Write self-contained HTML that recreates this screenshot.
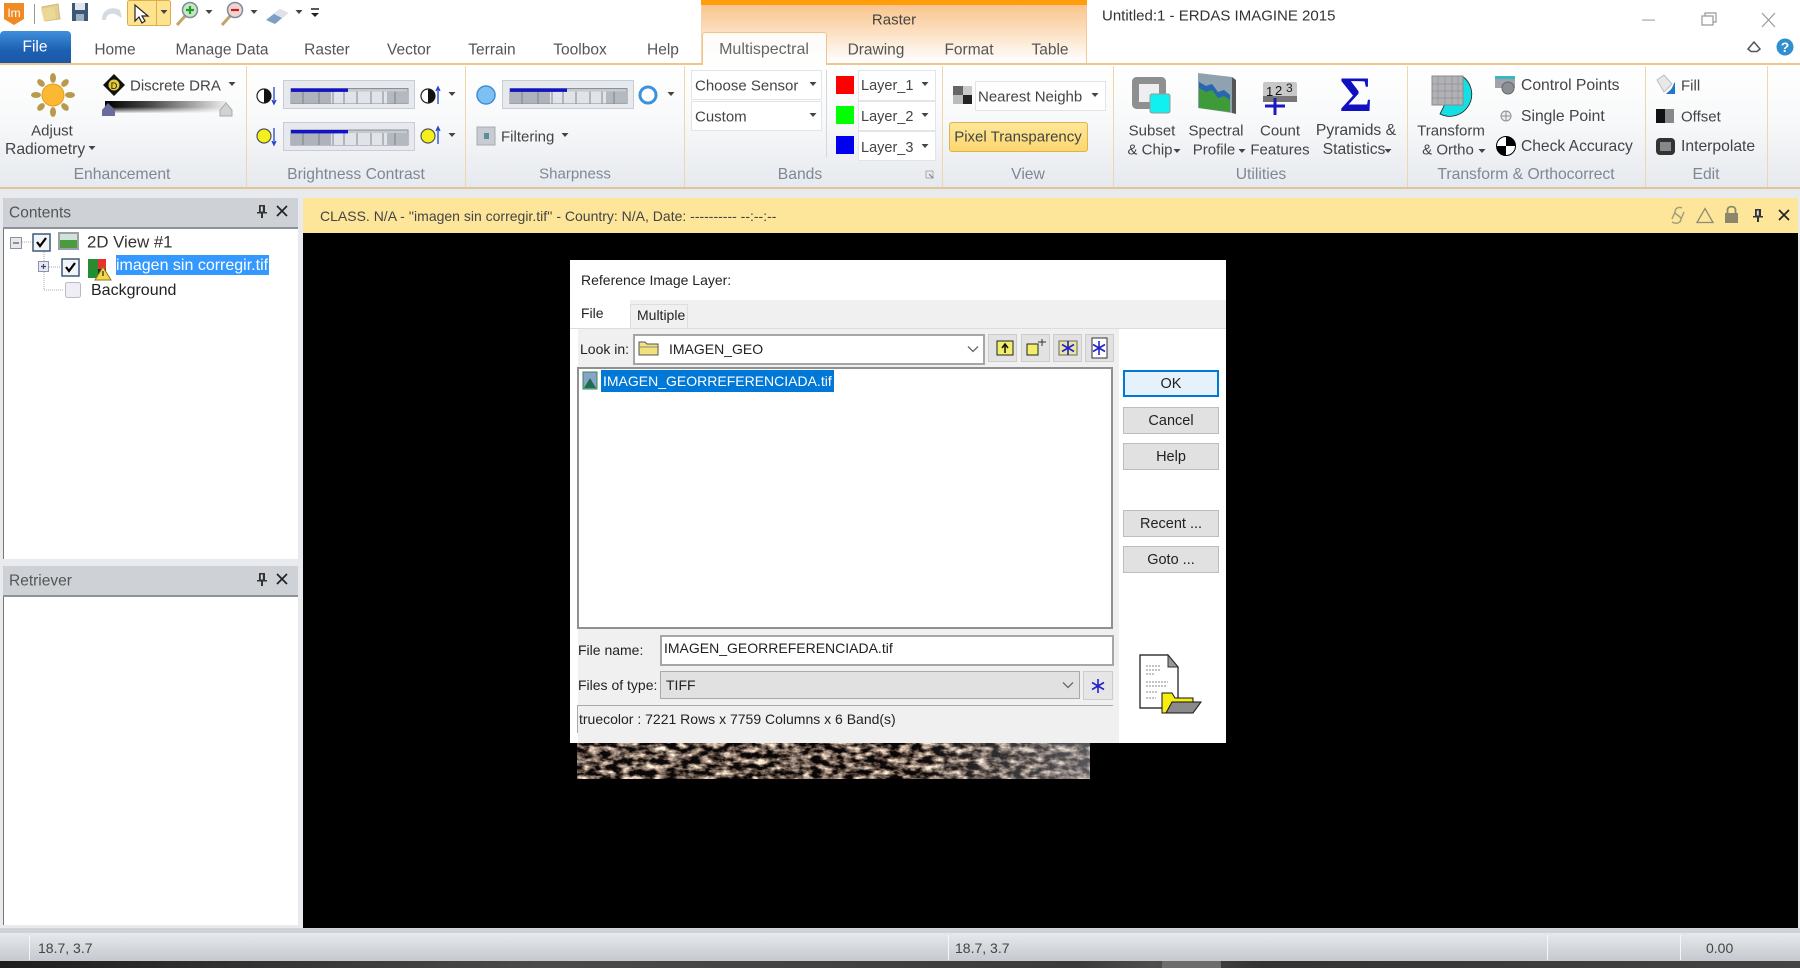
<!DOCTYPE html>
<html><head><meta charset="utf-8"><style>
html,body{margin:0;padding:0;width:1800px;height:968px;overflow:hidden;background:#e8eaed}
body{position:relative;font-family:"Liberation Sans",sans-serif;color:#333;font-size:15px}
#w{position:absolute;left:0;top:0;width:1800px;height:968px;overflow:hidden;filter:blur(.35px)}
.b{position:absolute;box-sizing:border-box}
.t{position:absolute;white-space:nowrap;line-height:1;transform:translateY(-50%)}
.c{position:absolute;white-space:nowrap;line-height:1;transform:translate(-50%,-50%)}
.tab{color:#555;font-size:15.5px}.lab{color:#7e8892;font-size:15.7px}
.rb{color:#444}
.combo{position:absolute;box-sizing:border-box;background:#fff;border:1px solid #e2e4e8}
.slider{position:absolute;box-sizing:border-box;background:#e6e9ee;border:1px solid #c9ccd2}
.btn{position:absolute;box-sizing:border-box;background:#e1e1e1;border:1px solid #bdbdbd;left:1123px;width:96px;height:27px;text-align:center;line-height:27px;font-size:14.5px;color:#222}
.d{color:#222;font-size:14px}
svg{position:absolute;left:0;top:0}
</style></head><body><div id="w">

<!-- title bar -->
<div class="b" style="left:0;top:0;width:1800px;height:63px;background:#fff"></div>
<div class="b" style="left:701px;top:0;width:386px;height:63px;background:linear-gradient(#f9c48c 5px,#fbd9b4 25px,#fff 62px);border-left:1px solid #f3d4b0;border-right:1px solid #f3c89a"></div>
<div class="b" style="left:701px;top:0;width:386px;height:5px;background:#ff9d0a"></div>
<div class="b" style="left:0;top:31px;width:71px;height:33px;background:linear-gradient(#3f8fdc,#1c5fb0 60%,#1a58a6);border-radius:4px 4px 0 0"></div>

<!-- ribbon -->
<div class="b" style="left:0;top:63px;width:1800px;height:126px;background:linear-gradient(#fff 0,#f8f9fa 45%,#e6e9ee 100%);border-top:2px solid #ecc68c;border-bottom:2px solid #e0c59c"></div>
<div class="b" style="left:702px;top:32px;width:125px;height:33px;background:linear-gradient(#fdfaf6,#fff);border:1px solid #ecc68c;border-bottom:0;border-radius:3px 3px 0 0"></div>
<div class="b" style="left:246px;top:66px;width:1px;height:121px;background:#efd7ad"></div>
<div class="b" style="left:465px;top:66px;width:1px;height:121px;background:#efd7ad"></div>
<div class="b" style="left:684px;top:66px;width:1px;height:121px;background:#efd7ad"></div>
<div class="b" style="left:942px;top:66px;width:1px;height:121px;background:#efd7ad"></div>
<div class="b" style="left:1113px;top:66px;width:1px;height:121px;background:#efd7ad"></div>
<div class="b" style="left:1407px;top:66px;width:1px;height:121px;background:#efd7ad"></div>
<div class="b" style="left:1645px;top:66px;width:1px;height:121px;background:#efd7ad"></div>
<div class="b" style="left:1767px;top:66px;width:1px;height:121px;background:#efd7ad"></div>
<div class="b" style="left:826px;top:70px;width:1px;height:87px;background:#d5d7da"></div>

<div class="slider" style="left:283px;top:80px;width:132px;height:29px"></div>
<div class="slider" style="left:283px;top:122px;width:132px;height:29px"></div>
<div class="slider" style="left:502px;top:80px;width:132px;height:29px"></div>

<div class="combo" style="left:691px;top:70px;width:131px;height:30px"></div>
<div class="combo" style="left:691px;top:101px;width:131px;height:30px"></div>
<div class="combo" style="left:858px;top:70px;width:78px;height:31px"></div>
<div class="combo" style="left:858px;top:101px;width:78px;height:30px"></div>
<div class="combo" style="left:858px;top:131px;width:78px;height:30px"></div>
<div class="combo" style="left:975px;top:81px;width:131px;height:30px"></div>
<div class="b" style="left:949px;top:122px;width:139px;height:30px;background:linear-gradient(#fde79a,#fcd76f);border:1px solid #dfb24a;border-radius:3px"></div>
<div class="b" style="left:836px;top:76px;width:18px;height:18px;background:#f00"></div>
<div class="b" style="left:836px;top:106px;width:18px;height:18px;background:#0f0"></div>
<div class="b" style="left:836px;top:136px;width:18px;height:18px;background:#00e"></div>

<!-- panels -->
<div class="b" style="left:3px;top:198px;width:295px;height:31px;background:#ced2d7;border-bottom:2px solid #8e9298"></div>
<div class="b" style="left:3px;top:229px;width:295px;height:330px;background:#fff;border-left:1px solid #777"></div>
<div class="b" style="left:3px;top:566px;width:295px;height:31px;background:#ced2d7;border-bottom:2px solid #8e9298"></div>
<div class="b" style="left:3px;top:597px;width:295px;height:328px;background:#fff;border-left:1px solid #777"></div>
<div class="b" style="left:116px;top:255px;width:153px;height:20px;background:#3399ff"></div>

<!-- view -->
<div class="b" style="left:303px;top:198px;width:1495px;height:35px;background:#fde69a"></div>
<div class="b" style="left:303px;top:233px;width:1495px;height:695px;background:#000"></div>

<!-- status bar -->
<div class="b" style="left:0;top:928px;width:1800px;height:5px;background:#cfd2d6"></div>
<div class="b" style="left:0;top:933px;width:1800px;height:28px;background:linear-gradient(#e6e9ed,#c5c9cf)"></div>
<div class="b" style="left:0;top:961px;width:1800px;height:7px;background:linear-gradient(90deg,#1e1e1e,#4a4a4a 30%,#3a3a3a 60%,#4e4e4e 64%,#333 70%,#444)"></div>
<div class="b" style="left:1162px;top:961px;width:59px;height:7px;background:#6d6d6d"></div>
<div class="b" style="left:29px;top:935px;width:1px;height:25px;background:#f5f6f7"></div>
<div class="b" style="left:948px;top:935px;width:1px;height:25px;background:#f5f6f7"></div>
<div class="b" style="left:1547px;top:935px;width:1px;height:25px;background:#f5f6f7"></div>
<div class="b" style="left:1680px;top:935px;width:1px;height:25px;background:#f5f6f7"></div>

<!-- dialog -->
<div class="b" style="left:570px;top:260px;width:656px;height:483px;background:#fff"></div>
<div class="b" style="left:570px;top:300px;width:656px;height:28px;background:#f0f0f0"></div>
<div class="b" style="left:570px;top:328px;width:549px;height:415px;background:#f0f0f0"></div>
<div class="b" style="left:570px;top:300px;width:60px;height:29px;background:#fff"></div>
<div class="b" style="left:630px;top:304px;width:58px;height:25px;background:#f0f0f0;border:1px solid #ddd;border-bottom:0"></div>
<div class="b" style="left:570px;top:328px;width:656px;height:1px;background:#dcdcdc"></div>
<div class="b" style="left:570px;top:329px;width:549px;height:414px;background:#f0f0f0"></div>
<div class="b" style="left:570px;top:329px;width:8px;height:414px;background:#fff"></div>
<div class="b" style="left:633px;top:334px;width:352px;height:31px;background:#fff;border:2px solid #a6a6a6"></div>
<div class="b" style="left:988px;top:334px;width:29px;height:28px;background:#e2e2e2;border:1px solid #ccc"></div>
<div class="b" style="left:1021px;top:334px;width:29px;height:28px;background:#e2e2e2;border:1px solid #ccc"></div>
<div class="b" style="left:1053px;top:334px;width:29px;height:28px;background:#e2e2e2;border:1px solid #ccc"></div>
<div class="b" style="left:1085px;top:334px;width:29px;height:28px;background:#e2e2e2;border:1px solid #ccc"></div>
<div class="b" style="left:577px;top:367px;width:536px;height:262px;background:#fff;border:2px solid #909090"></div>
<div class="b" style="left:601px;top:370px;width:233px;height:22px;background:#0078d7"></div>
<div class="b" style="left:660px;top:635px;width:454px;height:31px;background:#fff;border:2px solid #a6a6a6"></div>
<div class="b" style="left:660px;top:671px;width:420px;height:28px;background:#e1e1e1;border:1px solid #a9a9a9"></div>
<div class="b" style="left:1083px;top:671px;width:30px;height:29px;background:#e6e6e6;border:1px solid #ccc"></div>
<div class="b" style="left:577px;top:705px;width:536px;height:28px;background:#f0f0f0;border-top:1px solid #a9a9a9;border-left:1px solid #a9a9a9"></div>
<div class="btn" style="top:370px;background:#e5f1fb;border:2px solid #0078d7;line-height:25px">OK</div>
<div class="btn" style="top:407px">Cancel</div>
<div class="btn" style="top:443px">Help</div>
<div class="btn" style="top:510px">Recent ...</div>
<div class="btn" style="top:546px">Goto ...</div>

<!-- icons -->
<svg width="1800" height="968" viewBox="0 0 1800 968">
<defs>
<filter id="rock" x="0" y="0" width="100%" height="100%" color-interpolation-filters="sRGB">
<feTurbulence type="fractalNoise" baseFrequency=".09 .17" numOctaves="5" seed="23"/>
<feColorMatrix values="2.4 0 0 0 -.84 2.25 0 0 0 -.83 2.05 0 0 0 -.77 0 0 0 0 1"/>
</filter>
<linearGradient id="gr" x1="0" x2="1"><stop offset="0" stop-color="#8f9096" stop-opacity=".06"/><stop offset=".65" stop-color="#9aa0a8" stop-opacity=".04"/><stop offset=".85" stop-color="#a0a4ac" stop-opacity=".32"/><stop offset="1" stop-color="#b2b6bd" stop-opacity=".48"/></linearGradient>
<linearGradient id="dra" x1="0" x2="1"><stop offset="0" stop-color="#000"/><stop offset=".35" stop-color="#444"/><stop offset="1" stop-color="#eee"/></linearGradient>
<linearGradient id="dra2" x1="0" x2="0" y1="0" y2="1"><stop offset="0" stop-color="#fff" stop-opacity="0"/><stop offset="1" stop-color="#fff" stop-opacity=".9"/></linearGradient>
<g id="track">
<rect x="0" y="0" width="117" height="15" fill="#c5cad1" stroke="#8b8f96" stroke-width="1"/>
<rect x="0" y="3" width="40" height="12" fill="#aeb3bb"/><rect x="96" y="3" width="21" height="12" fill="#b4b9c0"/>
<rect x="40" y="3" width="56" height="12" fill="#e0e3e8"/>
<path d="M12 3v12M28 3v12M42 3v12M53 3v12M66 3v12M80 3v12M92 3v12M104 3v12" stroke="#6f737a" stroke-width=".8"/>
<rect x="0" y="0" width="57" height="3.4" fill="#1212c8"/>
</g>
<g id="tri"><path d="M-3.5 -2H3.5L0 2z" fill="#444"/></g>
<g id="chev"><path d="M-5 -2.5L0 2.5L5 -2.5" fill="none" stroke="#666" stroke-width="1.3"/></g>
<g id="star"><path d="M0 -7V7M-6 -3.5L6 3.5M-6 3.5L6 -3.5" stroke="#2222cc" stroke-width="1.6"/></g>
<g id="fold"><path d="M-10 6V-7H-4L-2 -5H9V6z" fill="#f2e27c" stroke="#555"/><path d="M-10 -2H10" stroke="#888"/></g>
<g id="pin"><path d="M-3 -6H3V1H5V2.500H1V7H-1V2.500H-5V1H-3z" fill="#333"/><rect x="-1.200" y="-4.500" width="2" height="5" fill="#ddd"/></g>
<g id="x"><path d="M-5 -5L5 5M5 -5L-5 5" stroke="#222" stroke-width="1.700"/></g>
<g id="chk"><rect x="-8" y="-8" width="17" height="17" fill="#f2f4f8" stroke="#3e5a78" stroke-width="1.500"/><path d="M-4 0L-1 4L5 -4" fill="none" stroke="#000" stroke-width="2.200"/></g>
</defs>

<!-- rock strip -->
<rect x="577" y="743" width="513" height="36" filter="url(#rock)"/>
<rect x="577" y="743" width="513" height="36" fill="url(#gr)"/>

<!-- QAT -->
<path d="M4 3H24V19L14 25L4 19z" fill="#f08a24"/><text x="14" y="17" text-anchor="middle" font-family="Liberation Sans" font-size="12" fill="#fff">Im</text>
<rect x="34" y="4" width="1" height="20" fill="#999"/>
<path d="M42 7L58 4L60 19L45 21z" fill="#e2cf90" stroke="#cdbb7c"/><path d="M41 9L54 7L56 19L44 21z" fill="#ecd896"/>
<path d="M72 3H88V21H72z" fill="#3d5877"/><rect x="75" y="3" width="10" height="7" fill="#dfe6ee"/><rect x="76" y="14" width="8" height="7" fill="#9fb0c0"/>
<path d="M102 20C102 9 112 6 120 10L122 18L115 14C110 13 106 15 106 20z" fill="#d6dbe2"/>
<rect x="127.500" y=".5" width="43" height="25" rx="2" fill="#fde38f" stroke="#dcae4a"/><rect x="156" y="1" width="1" height="24" fill="#dcae4a"/>
<path d="M135 5L135 21L139 17L142 23L145 21L142 16L148 16z" fill="#fff" stroke="#222" stroke-width="1.200"/>
<use href="#tri" x="164" y="12"/>
<path d="M177 25L186 15" stroke="#c4a36a" stroke-width="3"/><circle cx="190" cy="10" r="7.500" fill="#c6e8c0" stroke="#7b8c9c" stroke-width="1.500"/><path d="M190 6V14M186 10H194" stroke="#1f9e2a" stroke-width="2.200"/>
<use href="#tri" x="209" y="12"/>
<path d="M222 25L231 15" stroke="#c4a36a" stroke-width="3"/><circle cx="235" cy="10" r="7.500" fill="#f3d2d2" stroke="#7b8c9c" stroke-width="1.500"/><path d="M231 10H239" stroke="#c02020" stroke-width="2.200"/>
<use href="#tri" x="254" y="12"/>
<path d="M266 20L280 9L288 13L275 24z" fill="#7d9fc6"/><path d="M274 14L280 9L288 13L282 18z" fill="#dfe3e8"/>
<use href="#tri" x="299" y="12"/>
<path d="M311 9H319" stroke="#222" stroke-width="1.500"/><path d="M311 13H319L315 17z" fill="#222"/>

<!-- window controls -->
<rect x="1642" y="19.500" width="13" height="1.200" fill="#aaa"/>
<path d="M1702 16H1713V25H1702zM1705 16V13H1716V22H1713" fill="none" stroke="#999" stroke-width="1.200"/>
<path d="M1762 13L1775 27M1775 13L1762 27" stroke="#999" stroke-width="1.200"/>
<path d="M1748 49L1754 42L1760 49L1757 51.500H1751z" fill="none" stroke="#555" stroke-width="1.500"/>
<circle cx="1785" cy="47" r="8.500" fill="#2f8fd0"/><text x="1785" y="52" text-anchor="middle" font-family="Liberation Sans" font-size="14" font-weight="bold" fill="#fff">?</text>

<!-- sun -->
<g transform="translate(53 95)">
<g fill="#b89a4c"><ellipse cx="0" cy="-17" rx="3" ry="5"/><ellipse cx="0" cy="17" rx="3" ry="5"/><ellipse cx="-17" cy="0" rx="5" ry="3"/><ellipse cx="17" cy="0" rx="5" ry="3"/><ellipse cx="-12" cy="-12" rx="3" ry="4.500" transform="rotate(-45 -12 -12)"/><ellipse cx="12" cy="-12" rx="3" ry="4.500" transform="rotate(45 12 -12)"/><ellipse cx="-12" cy="12" rx="3" ry="4.500" transform="rotate(45 -12 12)"/><ellipse cx="12" cy="12" rx="3" ry="4.500" transform="rotate(-45 12 12)"/></g>
<circle r="11" fill="#fbb832" stroke="#e59a20"/></g>
<!-- DRA -->
<path d="M114 74L125 85L114 96L103 85z" fill="#111"/><circle cx="114" cy="85" r="5.500" fill="#e3c93c"/><text x="114" y="89" font-family="Liberation Sans" font-size="9" text-anchor="middle" fill="#111">D</text>
<rect x="105" y="101" width="122" height="12" fill="url(#dra)"/><rect x="105" y="107" width="122" height="6" fill="url(#dra2)"/>
<path d="M102 116V110L108 103L115 110V116z" fill="#6a6a9c"/><path d="M220 116V110L226 103L232 110V116z" fill="#d2d2d2" stroke="#aaa"/>
<use href="#tri" x="232" y="84"/><use href="#tri" x="92" y="148"/>

<!-- Brightness -->
<use href="#track" x="291" y="88.500"/><use href="#track" x="291" y="130"/><use href="#track" x="510" y="88.500"/>
<circle cx="264" cy="96" r="7" fill="#fff" stroke="#222" stroke-width="1.200"/><path d="M264 89A7 7 0 0 1 264 103z" fill="#111"/><path d="M274 87V103M272 100L274 104L276 100" stroke="#2244cc" fill="none" stroke-width="1.300"/>
<circle cx="428" cy="96" r="7" fill="#fff" stroke="#222" stroke-width="1.200"/><path d="M428 89A7 7 0 0 1 428 103z" fill="#111"/><path d="M438 88V104M436 91L438 87L440 91" stroke="#2244cc" fill="none" stroke-width="1.300"/>
<use href="#tri" x="452" y="94"/>
<circle cx="264" cy="136" r="7" fill="#f4f01e" stroke="#555" stroke-width="1.200"/><path d="M274 128V144M272 141L274 145L276 141" stroke="#2244cc" fill="none" stroke-width="1.300"/>
<circle cx="428" cy="136" r="7" fill="#f4f01e" stroke="#555" stroke-width="1.200"/><path d="M438 128V144M436 131L438 127L440 131" stroke="#2244cc" fill="none" stroke-width="1.300"/>
<use href="#tri" x="452" y="135"/>
<!-- Sharpness -->
<circle cx="486" cy="95" r="9" fill="#7fc0f3" stroke="#3e8fd6" stroke-width="1.500"/>
<circle cx="648" cy="95" r="8" fill="#fff" stroke="#3b92dc" stroke-width="3"/>
<use href="#tri" x="671" y="94"/>
<rect x="477" y="127" width="18" height="18" fill="#c8ccd0" stroke="#a8acb2"/><rect x="484" y="133" width="5" height="6" fill="#5a8f9e"/>
<use href="#tri" x="565" y="135"/>

<!-- Bands combos -->
<use href="#tri" x="813" y="84"/><use href="#tri" x="813" y="115"/>
<use href="#tri" x="925" y="84"/><use href="#tri" x="925" y="115"/><use href="#tri" x="925" y="146"/>
<path d="M926 171H933V178H926z" fill="none" stroke="#aaa"/><path d="M929 174L933 178" stroke="#777"/>
<!-- View -->
<rect x="953" y="86" width="10" height="9" fill="#666"/><rect x="963" y="86" width="9" height="9" fill="#c9c9c9"/><rect x="953" y="95" width="10" height="9" fill="#bbb"/><rect x="963" y="95" width="9" height="9" fill="#222"/>
<use href="#tri" x="1095" y="95"/>

<!-- Subset -->
<rect x="1135.500" y="80.500" width="27" height="25" fill="#eceef0" stroke="#8f8f8f" stroke-width="7" rx="1"/>
<rect x="1150" y="94" width="20" height="19" rx="2" fill="#10f0f0" stroke="#999"/>
<use href="#tri" x="1177" y="151"/>
<!-- Spectral -->
<path d="M1198 73L1232 77V113L1198 108z" fill="#8fa2b0"/>
<path d="M1199 82L1206 86L1212 84L1218 92L1224 90L1230 95V112L1199 108z" fill="#3f9a3a"/>
<path d="M1199 82L1206 86L1212 84L1218 92L1224 90L1230 95V100L1224 96L1218 98L1212 90L1206 92L1199 88z" fill="#2a66b0"/>
<path d="M1232 77L1236 80V114L1232 113z" fill="#555"/>
<use href="#tri" x="1242" y="151"/>
<!-- Count -->
<rect x="1263" y="82" width="34" height="20" rx="2" fill="#c8c8c8"/><rect x="1263" y="96" width="34" height="6" fill="#777"/>
<text x="1266" y="96" font-family="Liberation Sans" font-size="13" fill="#111">1</text><text x="1275" y="95" font-family="Liberation Sans" font-size="13" fill="#111">2</text><text x="1286" y="92" font-family="Liberation Sans" font-size="12" fill="#222">3</text>
<path d="M1275 98V115M1265 106H1285" stroke="#1a1abf" stroke-width="3"/>
<!-- Sigma -->
<text x="1356" y="111" text-anchor="middle" font-family="Liberation Serif" font-size="50" font-weight="bold" fill="#1010c0">Σ</text>
<use href="#tri" x="1388" y="151"/>
<!-- Transform -->
<path d="M1462 76A22 22 0 0 1 1440 114L1445 104H1462z" fill="#14e0e4" stroke="#1a1a1a" stroke-width=".8"/>
<path d="M1432 76H1463V105H1432z" fill="#b2b2b6" stroke="#8a8a8e"/>
<path d="M1438 76V105M1445 76V105M1452 76V105M1458 76V105M1432 84H1463M1432 91H1463M1432 98H1463" stroke="#8f8f94" stroke-width=".7"/>
<use href="#tri" x="1482" y="151"/>
<!-- Control points etc -->
<rect x="1495" y="76" width="20" height="12" fill="#a0a4aa"/><rect x="1495" y="76" width="20" height="3" fill="#39b7bf"/>
<circle cx="1508" cy="88" r="6" fill="#8a8f96" stroke="#666"/>
<circle cx="1506" cy="116" r="5" fill="#eef0f2" stroke="#8a8f96"/><path d="M1501 116H1511M1506 111V121" stroke="#8a8f96"/>
<circle cx="1506" cy="146" r="9.500" fill="#fff" stroke="#000"/><path d="M1506 136.500A9.500 9.500 0 0 1 1515.500 146H1506zM1506 146V155.500A9.500 9.500 0 0 1 1496.500 146z" fill="#000"/>
<!-- Edit -->
<path d="M1657 80L1664 75L1672 84L1664 92z" fill="#e8e8e8" stroke="#bbb"/><path d="M1668 92C1673 89 1673 84 1675 82L1675 94H1666z" fill="#1f78c8"/>
<rect x="1656" y="109" width="9" height="14" fill="#111"/><rect x="1665" y="109" width="9" height="14" fill="#888"/>
<rect x="1656" y="138" width="19" height="17" rx="4" fill="#333"/><rect x="1660" y="142" width="11" height="9" fill="#888"/>

<!-- panel icons -->
<use href="#pin" x="262" y="211"/><use href="#x" x="282" y="211"/>
<use href="#pin" x="262" y="579"/><use href="#x" x="282" y="579"/>
<rect x="10.500" y="237.500" width="11" height="11" fill="#e6e8ec" stroke="#8c93a0"/><path d="M13 243H19" stroke="#555" stroke-width="1.200"/>
<path d="M22 242H33M44 250V290M49 267H61M44 290H63" stroke="#aaa" stroke-dasharray="1 1" fill="none"/>
<use href="#chk" x="41" y="242"/>
<rect x="58" y="232" width="21" height="18" fill="#9aa0a8"/><rect x="60" y="234" width="17" height="6" fill="#cfe3d8"/><rect x="60" y="240" width="17" height="8" fill="#4c9a3e"/>
<rect x="38.500" y="261.500" width="10" height="10" fill="#e6e8f0" stroke="#8c93b0"/><path d="M41 266.500H46M43.500 264V269" stroke="#447" stroke-width="1.200"/>
<use href="#chk" x="70" y="267"/>
<rect x="88" y="259" width="10" height="10" fill="#2a8a30"/><rect x="98" y="259" width="8" height="10" fill="#e83030"/><rect x="88" y="269" width="10" height="9" fill="#1f8f2f"/><rect x="98" y="269" width="8" height="9" fill="#222"/>
<path d="M103 267L111 280H95z" fill="#f5d84a" stroke="#8a7a20"/><path d="M103 271V276" stroke="#222" stroke-width="1.200"/>
<rect x="65.500" y="282.500" width="15" height="15" rx="2" fill="#eeeef6" stroke="#bbb"/>

<!-- view bar icons -->
<path d="M1682 208C1678 206 1675 209 1675 212C1675 215 1681 216 1681 219C1681 222 1677 225 1672 222M1675 212L1672 219M1681 219L1684 212" fill="none" stroke="#a39c82" stroke-width="1.500"/>
<path d="M1697 222.500L1705 208.500L1713 222.500z" fill="none" stroke="#8e8a76" stroke-width="1.300"/>
<rect x="1725" y="213" width="13" height="10" fill="#8c866c"/><path d="M1727.500 213V210C1727.500 205.500 1735.500 205.500 1735.500 210V213" fill="none" stroke="#8c866c" stroke-width="1.800"/>
<use href="#pin" x="1758" y="215"/><use href="#x" x="1784" y="215"/>

<!-- dialog icons -->
<use href="#fold" x="649" y="349"/><use href="#chev" x="973" y="349"/>
<rect x="997" y="341" width="16" height="14" fill="#f3ee6a" stroke="#222"/><path d="M1005 353V345M1002 348L1005 344L1008 348" fill="none" stroke="#111" stroke-width="1.500"/>
<path d="M1027 344H1038V355H1027z" fill="#f3ee6a" stroke="#222"/><path d="M1042 339L1042 346M1038 342H1046" stroke="#333"/>
<rect x="1059" y="341" width="18" height="14" fill="#e9e6a0" stroke="#666"/><use href="#star" x="1068" y="348"/>
<rect x="1092" y="338" width="15" height="20" fill="#fff" stroke="#333"/><use href="#star" x="1099" y="348"/>
<rect x="583" y="372" width="14" height="17" fill="#88a4c8" stroke="#385"/><path d="M584 388L590 378L596 388z" fill="#1f6e4d"/>
<use href="#chev" x="1068" y="685"/>
<use href="#star" x="1098" y="686"/>
<path d="M1140 655H1168L1178 667V708H1140z" fill="#fff" stroke="#111" stroke-width="1.200"/><path d="M1168 655L1178 667H1168z" fill="#999" stroke="#333"/>
<path d="M1146 666H1160M1146 670H1160M1146 674H1154M1146 682H1168M1146 686H1166M1146 692H1158M1146 698H1156" stroke="#888" stroke-dasharray="2 1"/>
<path d="M1162 713V693H1172L1175 698H1193V702H1172L1168 713z" fill="#f6ee10" stroke="#111"/>
<path d="M1166 713L1172 702H1201L1193 713z" fill="#8a8a8a" stroke="#111"/>
</svg>

<!-- tabs text -->
<div class="c" style="left:35px;top:47px;color:#fff;font-size:15.5px">File</div>
<div class="c tab" style="left:115px;top:49.500px">Home</div>
<div class="c tab" style="left:222px;top:49.500px">Manage Data</div>
<div class="c tab" style="left:327px;top:49.500px">Raster</div>
<div class="c tab" style="left:409px;top:49.500px">Vector</div>
<div class="c tab" style="left:492px;top:49.500px">Terrain</div>
<div class="c tab" style="left:580px;top:49.500px">Toolbox</div>
<div class="c tab" style="left:663px;top:49.500px">Help</div>
<div class="c tab" style="left:764px;top:49.500px;font-size:16px;color:#666">Multispectral</div>
<div class="c tab" style="left:876px;top:49.500px">Drawing</div>
<div class="c tab" style="left:969px;top:49.500px">Format</div>
<div class="c tab" style="left:1050px;top:49.500px">Table</div>
<div class="c" style="left:894px;top:20px;font-size:15px;color:#444">Raster</div>
<div class="t" style="left:1102px;top:16px;font-size:15px;color:#333">Untitled:1 - ERDAS IMAGINE 2015</div>

<!-- ribbon text -->
<div class="c rb" style="left:52px;top:131px">Adjust</div>
<div class="t rb" style="left:5px;top:150px;font-size:15.7px">Radiometry</div>
<div class="t rb" style="left:130px;top:86px">Discrete DRA</div>
<div class="t rb" style="left:501px;top:137px">Filtering</div>
<div class="t rb" style="left:695px;top:86px">Choose Sensor</div>
<div class="t rb" style="left:695px;top:117px">Custom</div>
<div class="t rb" style="left:861px;top:86px;font-size:14.5px">Layer_1</div>
<div class="t rb" style="left:861px;top:117px;font-size:14.5px">Layer_2</div>
<div class="t rb" style="left:861px;top:148px;font-size:14.5px">Layer_3</div>
<div class="t rb" style="left:978px;top:96.500px">Nearest Neighb</div>
<div class="c rb" style="left:1018px;top:137px">Pixel Transparency</div>
<div class="c rb" style="left:1152px;top:131px">Subset</div>
<div class="c rb" style="left:1150px;top:150px">&amp; Chip</div>
<div class="c rb" style="left:1216px;top:131px">Spectral</div>
<div class="c rb" style="left:1214px;top:150px">Profile</div>
<div class="c rb" style="left:1280px;top:131px">Count</div>
<div class="c rb" style="left:1280px;top:150px">Features</div>
<div class="c rb" style="left:1356px;top:131px;font-size:15.7px">Pyramids &amp;</div>
<div class="c rb" style="left:1354px;top:150px;font-size:15.7px">Statistics</div>
<div class="c rb" style="left:1451px;top:131px">Transform</div>
<div class="c rb" style="left:1448px;top:150px">&amp; Ortho</div>
<div class="t rb" style="left:1521px;top:86px;font-size:15.7px">Control Points</div>
<div class="t rb" style="left:1521px;top:117px;font-size:15.7px">Single Point</div>
<div class="t rb" style="left:1521px;top:147px;font-size:15.6px">Check Accuracy</div>
<div class="t rb" style="left:1681px;top:86px">Fill</div>
<div class="t rb" style="left:1681px;top:117px">Offset</div>
<div class="t rb" style="left:1681px;top:147px;font-size:15.7px">Interpolate</div>

<div class="c lab" style="left:122px;top:174.500px">Enhancement</div>
<div class="c lab" style="left:356px;top:174.500px">Brightness Contrast</div>
<div class="c lab" style="left:575px;top:174px;font-size:15px">Sharpness</div>
<div class="c lab" style="left:800px;top:174.500px">Bands</div>
<div class="c lab" style="left:1028px;top:174.500px">View</div>
<div class="c lab" style="left:1261px;top:174.500px">Utilities</div>
<div class="c lab" style="left:1526px;top:174.500px">Transform &amp; Orthocorrect</div>
<div class="c lab" style="left:1706px;top:174.500px">Edit</div>

<!-- panels text -->
<div class="t" style="left:9px;top:212.500px;font-size:15.5px;color:#555">Contents</div>
<div class="t" style="left:9px;top:581px;font-size:15.5px;color:#555">Retriever</div>
<div class="t" style="left:87px;top:243px;font-size:16.8px;color:#333">2D View #1</div>
<div class="t" style="left:116px;top:266px;font-size:16px;color:#fff">imagen sin corregir.tif</div>
<div class="t" style="left:91px;top:291px;font-size:16px;color:#222">Background</div>
<div class="t" style="left:320px;top:216px;font-size:14px;color:#444">CLASS. N/A - ''imagen sin corregir.tif'' - Country: N/A, Date: ---------- --:--:--</div>

<!-- status text -->
<div class="t" style="left:38px;top:948px;font-size:14px;color:#444">18.7, 3.7</div>
<div class="t" style="left:955px;top:948px;font-size:14px;color:#444">18.7, 3.7</div>
<div class="t" style="left:1706px;top:948px;font-size:14px;color:#444">0.00</div>

<!-- dialog text -->
<div class="t d" style="left:581px;top:279.500px">Reference Image Layer:</div>
<div class="t d" style="left:581px;top:313px">File</div>
<div class="t d" style="left:637px;top:315px">Multiple</div>
<div class="t d" style="left:580px;top:349px">Look in:</div>
<div class="t d" style="left:669px;top:349px">IMAGEN_GEO</div>
<div class="t d" style="left:603px;top:381px;color:#fff">IMAGEN_GEORREFERENCIADA.tif</div>
<div class="t d" style="left:578px;top:650px">File name:</div>
<div class="t d" style="left:664px;top:648px">IMAGEN_GEORREFERENCIADA.tif</div>
<div class="t d" style="left:578px;top:685px">Files of type:</div>
<div class="t d" style="left:666px;top:685px">TIFF</div>
<div class="t d" style="left:579px;top:719px">truecolor : 7221 Rows x 7759 Columns x 6 Band(s)</div>

</div></body></html>
